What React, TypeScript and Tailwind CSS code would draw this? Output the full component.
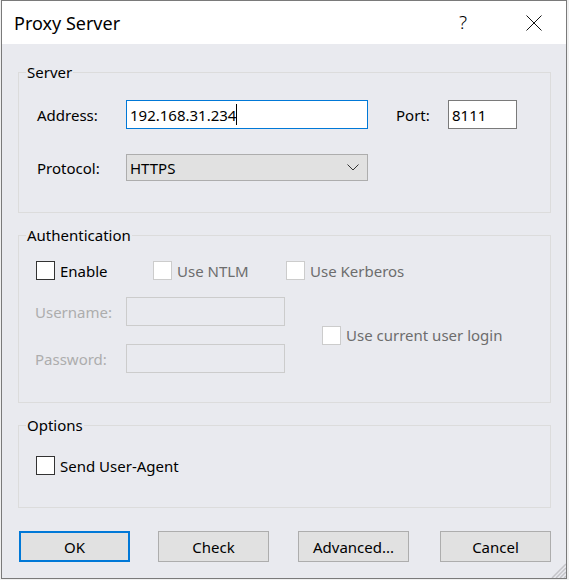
import React from 'react';

const font = { fontFamily: '"Noto Sans", "Open Sans", sans-serif' };

function GroupBox({ label, className, children }: { label: string; className: string; children: React.ReactNode }) {
    return (
        <div className={`relative border border-[#dcdcdc] ${className}`}>
            <span className="absolute left-[7px] top-[-10px] px-[1px] bg-[#e9eaef] text-[15px] leading-[18px] text-black">
                {label}
            </span>
            {children}
        </div>
    );
}

function CheckBox({ label, disabled }: { label: string; disabled?: boolean }) {
    return (
        <div className="flex items-center">
            <span className={`w-[19px] h-[19px] bg-white border ${disabled ? 'border-[#cccccc]' : 'border-[#333333]'}`} />
            <span className={`ml-[5px] text-[15px] leading-[18px] ${disabled ? 'text-[#6d6d6d]' : 'text-black'}`}>{label}</span>
        </div>
    );
}

function Button({ label, primary, className = '' }: { label: string; primary?: boolean; className?: string }) {
    return (
        <div
            className={`w-[111px] h-[31px] flex items-center justify-center bg-[#e1e1e1] text-[15px] text-black ${
                primary ? 'border-2 border-[#0078d7]' : 'border border-[#adadad]'
            } ${className}`}
        >
            {label}
        </div>
    );
}

export default function App() {
    return (
        <div className="w-[569px] h-[580px] bg-[#f0f0f0]" style={font}>
            <div className="relative ml-[1px] w-[566px] h-[579px] border border-[#7a7a7a] flex flex-col bg-[#e9eaef]">
                {/* title bar */}
                <div className="h-[43px] bg-white flex items-center pl-[12px] shrink-0">
                    <span className="text-[18px] leading-none text-black">Proxy Server</span>
                    <span className="ml-auto text-[19px] leading-none text-black font-light">?</span>
                    <svg className="ml-[59px] mr-[24px]" width="16" height="16" viewBox="0 0 16 16">
                        <path d="M0.5 0.5 L15.5 15.5 M15.5 0.5 L0.5 15.5" stroke="#111" strokeWidth="1" fill="none" />
                    </svg>
                </div>

                {/* body */}
                <div className="flex-1 pl-[16px] pr-[15px] pt-[28px] text-[15px] leading-[18px] text-black">
                    <GroupBox label="Server" className="h-[141px]">
                        <div className="pl-[18px] pt-[27px]">
                            <div className="flex items-center">
                                <span className="w-[89px]">Address:</span>
                                <div className="w-[242px] h-[29px] bg-white border border-[#0078d7] flex items-center pl-[3px]">
                                    <span>192.168.31.234</span>
                                    <span className="inline-block w-px h-[21px] bg-black" />
                                </div>
                                <span className="ml-[28px] w-[52px]">Port:</span>
                                <div className="w-[69px] h-[29px] bg-white border border-[#7a7a7a] flex items-center pl-[3px]">
                                    8111
                                </div>
                            </div>
                            <div className="flex items-center mt-[25px]">
                                <span className="w-[89px]">Protocol:</span>
                                <div className="w-[242px] h-[27px] bg-[#e1e1e1] border border-[#adadad] flex items-center pl-[3px] pr-[8px]">
                                    <span>HTTPS</span>
                                    <svg className="ml-auto" width="12" height="7" viewBox="0 0 12 7">
                                        <path d="M0.5 0.5 L6 6 L11.5 0.5" stroke="#333" strokeWidth="1" fill="none" />
                                    </svg>
                                </div>
                            </div>
                        </div>
                    </GroupBox>

                    <GroupBox label="Authentication" className="h-[168px] mt-[22px]">
                        <div className="pl-[17px] pt-[25px]">
                            <div className="flex items-center">
                                <div className="w-[117px]">
                                    <CheckBox label="Enable" />
                                </div>
                                <div className="w-[133px]">
                                    <CheckBox label="Use NTLM" disabled />
                                </div>
                                <CheckBox label="Use Kerberos" disabled />
                            </div>
                            <div className="flex items-center mt-[17px]">
                                <div className="flex flex-col gap-[18px] text-[#adadad]">
                                    <div className="flex items-center">
                                        <span className="w-[91px] -ml-[1px]">Username:</span>
                                        <div className="w-[159px] h-[29px] border border-[#cccccc]" />
                                    </div>
                                    <div className="flex items-center">
                                        <span className="w-[91px] -ml-[1px]">Password:</span>
                                        <div className="w-[159px] h-[29px] border border-[#cccccc]" />
                                    </div>
                                </div>
                                <div className="ml-[37px]">
                                    <CheckBox label="Use current user login" disabled />
                                </div>
                            </div>
                        </div>
                    </GroupBox>

                    <GroupBox label="Options" className="h-[83px] mt-[22px]">
                        <div className="pl-[17px] pt-[30px]">
                            <CheckBox label="Send User-Agent" />
                        </div>
                    </GroupBox>

                    <div className="flex mt-[23px] ml-[1px]">
                        <Button label="OK" primary />
                        <Button label="Check" className="ml-[28px]" />
                        <Button label="Advanced..." className="ml-[29px]" />
                        <Button label="Cancel" className="ml-[31px]" />
                    </div>
                </div>

                {/* size grip */}
                <svg className="absolute right-0 bottom-0" width="17" height="17" viewBox="0 0 17 17">
                    <path d="M17 3 L3 17 M17 7 L7 17 M17 11 L11 17 M17 15 L15 17" stroke="#c4c4c8" strokeWidth="1.5" fill="none" />
                </svg>
            </div>
        </div>
    );
}
